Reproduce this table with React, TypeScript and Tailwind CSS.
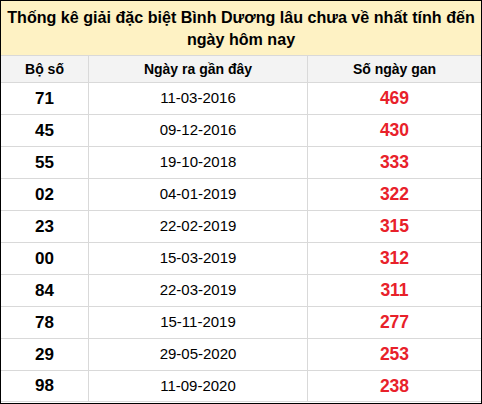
import React from "react";

const rows: [string, string, string][] = [
  ["71", "11-03-2016", "469"],
  ["45", "09-12-2016", "430"],
  ["55", "19-10-2018", "333"],
  ["02", "04-01-2019", "322"],
  ["23", "22-02-2019", "315"],
  ["00", "15-03-2019", "312"],
  ["84", "22-03-2019", "311"],
  ["78", "15-11-2019", "277"],
  ["29", "29-05-2020", "253"],
  ["98", "11-09-2020", "238"],
];

const App: React.FC = () => {
  return (
    <div className="w-[482px] h-[404px] border border-black bg-white font-['Liberation_Sans',Arial,sans-serif] text-black">
      <div className="h-[54px] bg-[#fef2c4] flex items-center justify-center text-center text-[16.1px] font-bold leading-[22px] whitespace-nowrap">
        <p>
          Thống kê giải đặc biệt Bình Dương lâu chưa về nhất tính đến
          <br />
          ngày hôm nay
        </p>
      </div>

      <div className="flex h-[27px] border-t border-[#d9d9d9] bg-[#f3f3f3] text-[14px] font-bold">
        <div className="w-[88px] border-r border-[#d9d9d9] flex items-center justify-center">Bộ số</div>
        <div className="w-[219px] border-r border-[#d9d9d9] flex items-center justify-center">Ngày ra gần đây</div>
        <div className="flex-1 flex items-center justify-center">Số ngày gan</div>
      </div>

      {rows.map(([num, date, days], i) => (
        <div
          key={num}
          className={`flex h-[32px] border-t border-[#d9d9d9] ${i === rows.length - 1 ? "border-b" : ""}`}
        >
          <div className="w-[88px] border-r border-[#d9d9d9] flex items-center justify-center text-[17px] font-bold">
            {num}
          </div>
          <div className="w-[219px] border-r border-[#d9d9d9] flex items-center justify-center text-[15px]">
            {date}
          </div>
          <div className="flex-1 flex items-center justify-center text-[17.5px] font-bold text-[#e8212a]">
            {days}
          </div>
        </div>
      ))}
    </div>
  );
};

export default App;
